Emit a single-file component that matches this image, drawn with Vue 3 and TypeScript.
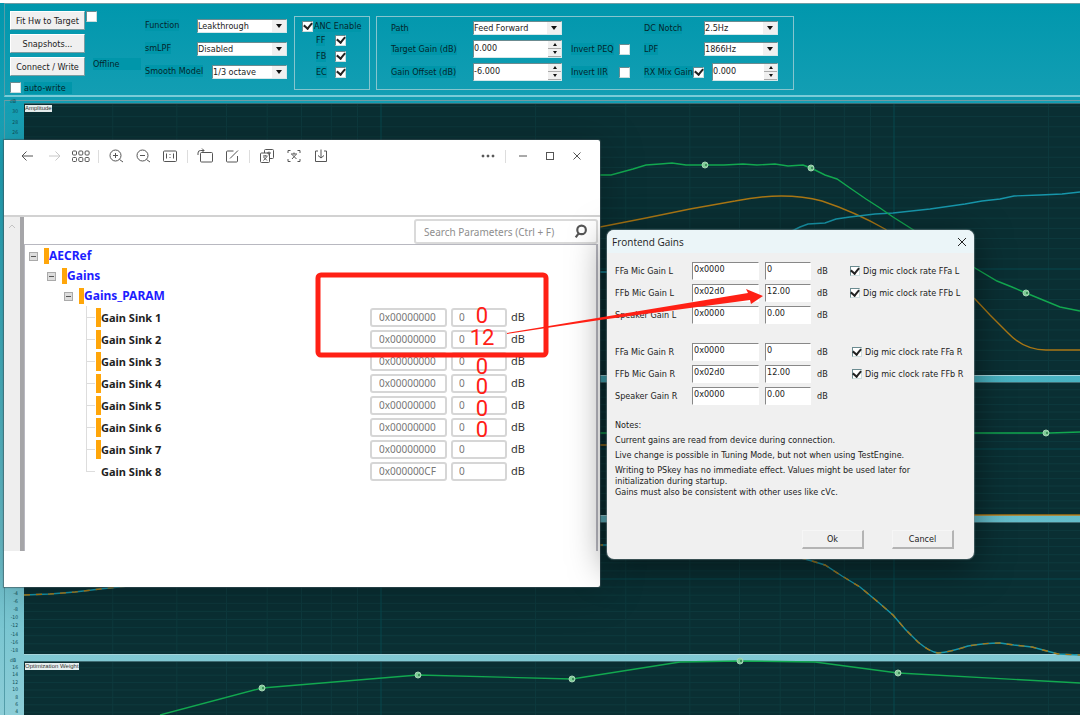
<script setup lang="ts">
import { ref } from 'vue'

interface Plot {
  id: string
  title: string
  top: number
  height: number
  zero: number
  step: number
  unit: boolean
  ticks: number[]
}

const range = (from: number, to: number, by = 2): number[] => {
  const out: number[] = []
  for (let v = from; v >= to; v -= by) out.push(v)
  return out
}

const plots: Plot[] = [
  { id: 'amplitude', title: 'Amplitude', top: 104, height: 271, zero: 269, step: 10.16, unit: true, ticks: range(30, -20) },
  { id: 'phase', title: '', top: 383, height: 132, zero: 449, step: 7.4, unit: false, ticks: range(16, -16) },
  { id: 'error', title: '', top: 523, height: 131, zero: 579, step: 8.1, unit: false, ticks: range(12, -18) },
  { id: 'weight', title: 'Optimization Weight', top: 662, height: 53, zero: 727, step: 7.4, unit: true, ticks: range(16, 4) },
]

const rows = (p: Plot): number[] => {
  const out: number[] = []
  for (let k = -40; k <= 40; k++) {
    const y = p.zero + k * p.step
    if (k !== 0 && y > p.top + 1 && y < p.top + p.height - 1) out.push(y)
  }
  return out
}

const decade = 513
const origin = -132
const minorX: number[] = []
for (let d = 0; d < 3; d++) {
  for (let n = 2; n < 10; n++) {
    const x = origin + decade * (d + Math.log10(n))
    if (x > 26 && x < 1080) minorX.push(x)
  }
}
const majorX = [origin + decade, origin + decade * 2]

const nodes: Record<string, number[][]> = {
  amplitude: [[705, 165], [811, 168], [1026, 293]],
  phase: [[1046, 433]],
  error: [],
  weight: [[262, 688], [418, 675], [572, 679], [740, 661], [898, 673]],
}

const green: Record<string, string> = {
  amplitude:
    '600,175 611,175 622,172 633,169 646,165 660,164 672,163 686,165 704,165 724,165 743,164 757,165 775,164 788,166 803,165 811,168 825,175 837,179 850,188 866,199 880,208 893,217 912,229 975,268 997,281 1012,287 1026,293 1043,300 1060,307 1080,311',
  phase: '24,433 1050,433 1080,432',
  weight: '160,715 262,688 418,675 572,679 680,662 740,661 815,662 898,673 1080,683',
}
const amber: Record<string, string> = {
  amplitude:
    'M24 330 L600 227 L646 218 L690 209 L735 201 Q784 191 822 201 Q855 212 885 229 L975 299 L990 315 L1008 333 Q1024 350 1046 350 L1080 350',
  phase: 'M24 445 H620 M974 515 H1080',
}
const cyan: Record<string, string> = {
  amplitude:
    '24,272 700,272 794,230 800,227 808,224 825,223 836,219 850,217 875,214 893,213 930,209 965,204 982,201 1000,199 1014,196 1040,195 1062,194 1080,192',
}
const dashed =
  'M24 595 L50 594 L75 592 L100 589 L128 586 L300 560 L500 545 L700 545 L801 558 L812 561 L825 565 L842 576 L860 587 L878 602 L893 615 L905 629 L918 642 Q930 652 938 653 Q950 652 968 646 Q985 643 1000 643 L1014 645 L1032 647 L1058 654 L1080 655'

const displays = ref([
  { key: 'FF', on: true },
  { key: 'FB', on: true },
  { key: 'EC', on: true },
])

const sinks = ref([
  { name: 'Gain Sink 1', raw: '0x00000000', db: '0', marked: true },
  { name: 'Gain Sink 2', raw: '0x00000000', db: '0', marked: true },
  { name: 'Gain Sink 3', raw: '0x00000000', db: '0', marked: true },
  { name: 'Gain Sink 4', raw: '0x00000000', db: '0', marked: true },
  { name: 'Gain Sink 5', raw: '0x00000000', db: '0', marked: true },
  { name: 'Gain Sink 6', raw: '0x00000000', db: '0', marked: true },
  { name: 'Gain Sink 7', raw: '0x00000000', db: '0', marked: true },
  { name: 'Gain Sink 8', raw: '0x000000CF', db: '0', marked: false },
])

const handNotes = [
  { text: '0', y: 323 },
  { text: '12', y: 345 },
  { text: '0', y: 374 },
  { text: '0', y: 394 },
  { text: '0', y: 416 },
  { text: '0', y: 437 },
]

const gainGroups = ref([
  {
    side: 'L',
    rows: [
      { id: 'ffal', label: 'FFa Mic Gain L', raw: '0x0000', db: '0', clock: 'Dig mic clock rate FFa L' },
      { id: 'ffbl', label: 'FFb Mic Gain L', raw: '0x02d0', db: '12.00', clock: 'Dig mic clock rate FFb L' },
      { id: 'spkl', label: 'Speaker Gain L', raw: '0x0000', db: '0.00', clock: '' },
    ],
  },
  {
    side: 'R',
    rows: [
      { id: 'ffar', label: 'FFa Mic Gain R', raw: '0x0000', db: '0', clock: 'Dig mic clock rate FFa R' },
      { id: 'ffbr', label: 'FFb Mic Gain R', raw: '0x02d0', db: '12.00', clock: 'Dig mic clock rate FFb R' },
      { id: 'spkr', label: 'Speaker Gain R', raw: '0x0000', db: '0.00', clock: '' },
    ],
  },
])
</script>

<template>
  <main class="app">
    <section class="toolbar">
      <div class="actions">
        <button type="button" class="push">Fit Hw to Target</button>
        <input type="checkbox" class="check side" aria-label="Auto fit" />
        <button type="button" class="push">Snapshots...</button>
        <span></span>
        <button type="button" class="push">Connect / Write</button>
        <span class="offline tag">Offline</span>
        <label class="auto"><input type="checkbox" class="check" /><span class="tag wide">auto-write</span></label>
      </div>

      <div class="modes">
        <label for="fn" class="tag">Function</label>
        <span class="drop"><select id="fn"><option>Leakthrough</option></select></span>
        <label for="sm" class="tag">smLPF</label>
        <span class="drop"><select id="sm"><option>Disabled</option></select></span>
        <label for="smooth" class="tag">Smooth Model</label>
        <span class="drop narrow"><select id="smooth"><option>1/3 octave</option></select></span>
      </div>

      <div class="box anc">
        <label class="anc-main"><input type="checkbox" class="check" checked /><span class="tag">ANC Enable</span></label>
        <label v-for="d in displays" :key="d.key" class="anc-row">
          <span class="tag">{{ d.key }}</span>
          <input v-model="d.on" type="checkbox" class="check" />
        </label>
      </div>

      <div class="box path">
        <label for="path" class="tag">Path</label>
        <span class="drop"><select id="path"><option>Feed Forward</option></select></span>
        <span></span>
        <label for="notch" class="tag">DC Notch</label>
        <span class="drop"><select id="notch"><option>2.5Hz</option></select></span>

        <label for="tg" class="tag">Target Gain (dB)</label>
        <span class="spin"><input id="tg" type="text" value="0.000" /><span class="arrows"><button type="button" aria-label="Increase"></button><button type="button" class="down" aria-label="Decrease"></button></span></span>
        <label class="invert"><span class="tag">Invert PEQ</span><input type="checkbox" class="check" /></label>
        <label for="lpf" class="tag">LPF</label>
        <span class="drop"><select id="lpf"><option>1866Hz</option></select></span>

        <label for="go" class="tag">Gain Offset (dB)</label>
        <span class="spin"><input id="go" type="text" value="-6.000" /><span class="arrows"><button type="button" aria-label="Increase"></button><button type="button" class="down" aria-label="Decrease"></button></span></span>
        <label class="invert"><span class="tag">Invert IIR</span><input type="checkbox" class="check" /></label>
        <label class="rx"><span class="tag">RX Mix Gain</span><input type="checkbox" class="check" checked /></label>
        <span class="spin short"><input type="text" value="0.000" aria-label="RX mix gain value" /><span class="arrows"><button type="button" aria-label="Increase"></button><button type="button" class="down" aria-label="Decrease"></button></span></span>
      </div>
    </section>

    <section class="charts">
      <div v-for="p in plots" :key="p.id" class="chart" :class="p.id">
        <div class="axis">
          <span v-if="p.unit" class="unit">dB</span>
          <span v-for="t in p.ticks" :key="t">{{ t }}</span>
        </div>
        <div class="plot">
          <svg :viewBox="`24 ${p.top} 1056 ${p.height}`" preserveAspectRatio="none" aria-hidden="true">
            <g class="grid">
              <line v-for="y in rows(p)" :key="'y' + y" x1="24" x2="1080" :y1="y" :y2="y" />
              <line v-for="x in minorX" :key="'x' + x" :x1="x" :x2="x" :y1="p.top" :y2="p.top + p.height" />
            </g>
            <g class="grid major">
              <line v-if="p.zero < 715" x1="24" x2="1080" :y1="p.zero" :y2="p.zero" />
              <line v-for="x in majorX" :key="x" :x1="x" :x2="x" :y1="p.top" :y2="p.top + p.height" />
            </g>
            <path v-if="amber[p.id]" class="amber" :d="amber[p.id]" />
            <polyline v-if="cyan[p.id]" class="cyan" :points="cyan[p.id]" />
            <polyline v-if="green[p.id]" class="green" :points="green[p.id]" />
            <template v-if="p.id === 'error'">
              <path class="cyan" :d="dashed" />
              <path class="amber dash" :d="dashed" />
            </template>
            <g v-for="n in nodes[p.id]" :key="n[0]" class="node">
              <circle :cx="n[0]" :cy="n[1]" r="3" />
              <circle class="core" :cx="n[0] + 1" :cy="n[1]" r="1" />
            </g>
          </svg>
          <span v-if="p.title" class="caption">{{ p.title }}</span>
        </div>
      </div>
    </section>

    <section class="viewer">
      <header class="viewer-bar">
        <button type="button" aria-label="Back"><svg viewBox="0 0 16 16"><path d="M14 8H3M7.500 3.500L3 8l4.500 4.500" /></svg></button>
        <button type="button" class="faint" aria-label="Forward"><svg viewBox="0 0 16 16"><path d="M3 8h11M9.500 3.500L14 8l-4.500 4.500" /></svg></button>
        <button type="button" class="thumbs" aria-label="Thumbnails"><svg viewBox="0 0 20 16"><g v-for="c in 3" :key="c"><rect :x="c * 6.300 - 4.800" y="3" width="4" height="4" rx="1" /><rect :x="c * 6.300 - 4.800" y="9.500" width="4" height="4" rx="1" /></g></svg></button>
        <i class="rule"></i>
        <button type="button" aria-label="Zoom in"><svg viewBox="0 0 16 16"><circle cx="7.500" cy="7.500" r="5.500" /><path d="M11.500 11.500L15 14M5 7.500h5M7.500 5v5" /></svg></button>
        <button type="button" aria-label="Zoom out"><svg viewBox="0 0 16 16"><circle cx="7.500" cy="7.500" r="5.500" /><path d="M11.500 11.500L15 14M5 7.500h5" /></svg></button>
        <button type="button" aria-label="Actual size"><svg viewBox="0 0 16 16"><rect x="1.500" y="3" width="13" height="10.500" rx="1" /><path d="M4.500 5.500v5M11.500 5.500v5M8 6v1M8 9v1" /></svg></button>
        <i class="rule"></i>
        <button type="button" aria-label="Rotate"><svg viewBox="0 0 16 16"><rect x="3.500" y="4.500" width="12" height="9.500" rx="1" /><path d="M1 7V5q0-2.500 2.500-2.500h3.500M5 .5l2 2-2 2" /></svg></button>
        <button type="button" aria-label="Edit"><svg viewBox="0 0 16 16"><path d="M9.500 3H3.500q-1 0-1 1v9q0 1 1 1h9q1 0 1-1V8M6 10.500l8-8" /></svg></button>
        <i class="rule"></i>
        <button type="button" aria-label="Translate"><svg viewBox="0 0 16 16"><path d="M5.500 5V2.500q0-1 1-1h7q1 0 1 1v7q0 1-1 1H11M2.500 5h7q1 0 1 1v7.500q0 1-1 1h-7q-1 0-1-1V6q0-1 1-1zM4 8h4.500M6.200 7v1M4.500 12.500L8 8.500M4.500 9l3.500 3.500M8 5h4M10 3.500v4" /></svg></button>
        <button type="button" aria-label="Recognize text"><svg viewBox="0 0 16 16"><path d="M2 5V2.500h2.500M11.500 2.500H14V5M14 11v2.500h-2.500M4.500 13.500H2V11M5 6h6M8 4.500V6M6 11l4-4.500M6 6.500l4.500 4.500" /></svg></button>
        <button type="button" aria-label="Save"><svg viewBox="0 0 16 16"><path d="M5 3H2.500v10.500h11V3H11M8 1.500V10M5 7.500L8 10l3-2.500" /></svg></button>
        <span class="push-right"></span>
        <button type="button" class="solid" aria-label="More"><svg viewBox="0 0 16 16"><circle cx="3" cy="8" r="1" /><circle cx="8" cy="8" r="1" /><circle cx="13" cy="8" r="1" /></svg></button>
        <i class="rule"></i>
        <button type="button" aria-label="Minimize"><svg viewBox="0 0 16 16"><path d="M4 8h8" /></svg></button>
        <button type="button" aria-label="Maximize"><svg viewBox="0 0 16 16"><rect x="4.500" y="4.500" width="7" height="7" /></svg></button>
        <button type="button" aria-label="Close viewer"><svg viewBox="0 0 16 16"><path d="M4.500 4.500l7 7M11.500 4.500l-7 7" /></svg></button>
      </header>

      <div class="viewer-body">
        <div class="gutter"><svg viewBox="0 0 8 5"><path d="M1 4l3-3 3 3" /></svg></div>
        <div class="params">
          <div class="search">
            <input type="search" placeholder="Search Parameters (Ctrl + F)" aria-label="Search Parameters" />
            <svg viewBox="0 0 14 14"><circle cx="8" cy="5.500" r="4" /><path d="M5.500 8.500L2.500 12.500" /></svg>
          </div>
          <div class="tree">
            <div class="branch root"><button type="button" class="toggle" aria-label="Collapse"></button><b>AECRef</b></div>
            <div class="branch second"><button type="button" class="toggle" aria-label="Collapse"></button><b>Gains</b></div>
            <div class="branch third"><button type="button" class="toggle" aria-label="Collapse"></button><b>Gains_PARAM</b></div>
            <ul>
              <li v-for="s in sinks" :key="s.name">
                <span class="sink" :class="{ marked: s.marked }">{{ s.name }}</span>
                <input v-model="s.raw" type="text" class="raw" :aria-label="s.name + ' raw value'" />
                <input v-model="s.db" type="text" class="value" :aria-label="s.name + ' in dB'" />
                <span class="db">dB</span>
              </li>
            </ul>
          </div>
        </div>
      </div>
    </section>

    <section class="dialog" role="dialog" aria-labelledby="dialog-title">
      <header>
        <h2 id="dialog-title">Frontend Gains</h2>
        <button type="button" aria-label="Close"><svg viewBox="0 0 10 10"><path d="M1 1l8 8M9 1l-8 8" /></svg></button>
      </header>
      <form @submit.prevent>
        <div v-for="g in gainGroups" :key="g.side" class="gains" :class="'side-' + g.side">
          <div v-for="r in g.rows" :key="r.id" class="gain">
            <label :for="r.id">{{ r.label }}</label>
            <input :id="r.id" v-model="r.raw" type="text" />
            <input v-model="r.db" type="text" :aria-label="r.label + ' in dB'" />
            <span>dB</span>
            <label v-if="r.clock" class="clock"><input type="checkbox" class="check" checked />{{ r.clock }}</label>
          </div>
        </div>
        <div class="notes">
          <p>Notes:</p>
          <p>Current gains are read from device during connection.</p>
          <p>Live change is possible in Tuning Mode, but not when using TestEngine.</p>
          <p>Writing to PSkey has no immediate effect. Values might be used later for<br />initialization during startup.<br />Gains must also be consistent with other uses like cVc.</p>
        </div>
        <footer>
          <button type="submit">Ok</button>
          <button type="button">Cancel</button>
        </footer>
      </form>
    </section>

    <svg class="callout" width="1080" height="715" viewBox="0 0 1080 715">
      <rect x="318" y="275" width="228" height="80" rx="3" />
      <path d="M507 333L748 293L746 289L763 296L751 304L750 300L600 320L507 334z" />
      <text v-for="n in handNotes" :key="n.y" x="482" :y="n.y">{{ n.text }}</text>
    </svg>
  </main>
</template>

<style>
html,
body {
  margin: 0;
}
</style>

<style scoped>
.app {
  position: relative;
  display: flex;
  flex-direction: column;
  box-sizing: border-box;
  height: 100vh;
  overflow: hidden;
  padding-left: 4px;
  border-top: 3px solid #fff;
  background: linear-gradient(#0097ad, #139eb3 13%, #47b2c1 52%, #8ccdd7);
  font-family: 'DejaVu Sans Condensed', 'DejaVu Sans', sans-serif;
  font-size: 9px;
  line-height: 12px;
  color: #04262c;
}
.app * {
  box-sizing: border-box;
}
button,
input,
select {
  font: inherit;
  color: inherit;
  margin: 0;
  padding: 0;
  border: 0;
  border-radius: 0;
}
button {
  cursor: pointer;
}

.toolbar {
  display: flex;
  align-items: flex-start;
  border-top: 1px solid #6f9ca4;
  border-left: 1px solid #549da9;
  border-bottom: 2px solid #7accd8;
  padding: 7px 0 0 5px;
}
.tag {
  justify-self: start;
  background: #0096aa;
}
.actions {
  display: grid;
  grid-template-columns: 75px auto;
  grid-template-rows: 19px 19px 19px 15px;
  gap: 4px 1px;
  width: 135px;
}
.push {
  background: #f0f0f0;
  color: #222;
  border: 1px solid;
  border-color: #fff #7c9da2 #7c9da2 #fff;
  white-space: nowrap;
}
.check {
  appearance: none;
  flex: none;
  display: grid;
  place-items: center;
  width: 11px;
  height: 11px;
  background: #fff;
  border: 1px solid;
  border-color: #6b8b90 #cdd #cdd #6b8b90;
}
.check:checked::after {
  content: '';
  width: 6px;
  height: 4px;
  margin-bottom: 2px;
  border: solid #222;
  border-width: 0 0 2px 2px;
  transform: rotate(-50deg);
}
.offline {
  align-self: center;
  width: 48px;
  margin-left: 7px;
  margin-bottom: 6px;
}
.auto {
  display: flex;
  align-items: center;
  gap: 3px;
}
.auto .wide {
  padding-right: 6px;
}

.modes {
  display: grid;
  grid-template-columns: 52px 90px;
  grid-auto-rows: 14px;
  align-items: center;
  row-gap: 9px;
  width: 149px;
  padding-top: 8px;
}
.modes label {
  white-space: nowrap;
  margin-bottom: 2px;
}
.drop {
  position: relative;
  display: flex;
  height: 14px;
  background: #fff;
  color: #222;
  border: 1px solid;
  border-color: #6b8b90 #d5e8ea #d5e8ea #6b8b90;
}
.drop.narrow {
  width: 75px;
  justify-self: end;
}
.drop select {
  appearance: none;
  width: 100%;
  background: transparent;
  line-height: 12px;
}
.drop::after {
  content: '';
  position: absolute;
  right: 4px;
  top: 4px;
  border: solid transparent;
  border-width: 4px 3px 0;
  border-top-color: #111;
}
.drop::before {
  content: '';
  position: absolute;
  right: 0;
  top: 0;
  bottom: 0;
  width: 14px;
  background: #f0f0f0;
}

.box {
  border: 1px solid #86c5ce;
  height: 74px;
  margin-top: 5px;
}
.anc {
  width: 76px;
  margin-right: 6px;
  padding: 3px 0 0 7px;
}
.anc-main {
  display: flex;
  align-items: center;
  gap: 1px;
  white-space: nowrap;
  height: 12px;
}
.anc-row {
  display: grid;
  grid-template-columns: 19px 11px;
  align-items: center;
  height: 16px;
  padding-left: 14px;
  box-sizing: content-box;
}
.path {
  display: grid;
  grid-template-columns: 82px 89px 82px 60px 74px;
  grid-template-rows: 14px 18px 18px;
  row-gap: 5px;
  align-items: center;
  width: 418px;
  padding: 4px 0 0 14px;
  align-content: start;
}
.path label {
  white-space: nowrap;
}
.spin {
  display: flex;
  height: 18px;
  background: #fff;
  color: #222;
  border: 1px solid;
  border-color: #6b8b90 #d5e8ea #d5e8ea #6b8b90;
}
.spin input {
  flex: 1;
  min-width: 0;
  background: transparent;
  padding-bottom: 2px;
}
.spin.short {
  margin-left: 8px;
}
.arrows {
  display: grid;
  width: 13px;
}
.arrows button {
  display: grid;
  place-items: center;
  background: #f0f0f0;
  border-bottom: 1px solid #aaa;
}
.arrows button::after {
  content: '';
  border: solid transparent;
  border-width: 0 2px 3px;
  border-bottom-color: #111;
}
.arrows .down::after {
  border-width: 3px 2px 0;
  border-top-color: #111;
}
.invert {
  display: flex;
  justify-content: space-between;
  align-items: center;
  padding: 0 14px 0 9px;
}
.rx {
  display: flex;
  align-items: center;
  justify-content: space-between;
}

.charts {
  flex: 1;
  min-height: 0;
  display: grid;
  grid-template-rows: 271fr 132fr 131fr 53fr;
  gap: 8px;
  margin-top: 3px;
  padding-top: 3px;
  border-top: 1px solid #6f9ca4;
  border-left: 1px solid #549da9;
}
.chart {
  display: grid;
  grid-template-columns: 19px 1fr;
  min-height: 0;
}
.axis {
  display: flex;
  flex-direction: column;
  justify-content: space-around;
  align-items: flex-end;
  min-height: 0;
  padding-right: 6px;
  font-size: 5px;
  line-height: 6px;
  color: #0f4d57;
}
.axis .unit {
  margin-right: 2px;
}
.amplitude .axis {
  margin-top: -8px;
}
.weight .axis {
  margin-top: -6px;
}
.plot {
  position: relative;
  min-height: 0;
  background: #0a2f33;
  box-shadow: 0 -1px #3f6c72, 0 1px #a6d5dc;
}
.plot > svg {
  display: block;
  width: 100%;
  height: 100%;
  overflow: visible;
}
.caption {
  position: absolute;
  left: 1px;
  top: 1px;
  background: #e6eeee;
  color: #333;
  font-family: 'Liberation Sans', Arial, sans-serif;
  font-size: 6px;
  line-height: 7px;
}
.grid line {
  stroke: #0e3a3e;
}
.grid.major line {
  stroke: #06494f;
}
.amber,
.cyan,
.green {
  fill: none;
  stroke-width: 1.4;
}
.amber {
  stroke: #a97614;
}
.cyan {
  stroke: #1796aa;
}
.green {
  stroke: #12a84f;
}
.dash {
  stroke-dasharray: 6 6;
}
.node circle {
  fill: #7fce97;
  stroke: #a5d2b4;
}
.node .core {
  fill: #2d7a4a;
  stroke: none;
}

.viewer {
  position: absolute;
  left: 4px;
  top: 137px;
  width: 596px;
  height: 447px;
  display: flex;
  flex-direction: column;
  background: #fff;
  border-radius: 0 2px 2px 0;
  box-shadow: 0 0 1px 1px rgba(60, 80, 85, 0.6), 4px 4px 40px rgba(0, 0, 0, 0.25);
  font-family: 'Noto Sans', 'Open Sans', sans-serif;
}
.viewer-bar {
  display: flex;
  align-items: center;
  flex: none;
  height: 32px;
  padding: 0 15px;
  gap: 11px;
}
.viewer-bar button {
  display: flex;
  background: transparent;
}
.viewer-bar svg {
  width: 16px;
  height: 16px;
  fill: none;
  stroke: #555;
}
.viewer-bar .thumbs {
  margin: 0 -2px;
}
.viewer-bar .thumbs svg {
  width: 20px;
}
.viewer-bar .faint svg {
  stroke: #c8c8c8;
}
.viewer-bar .solid svg {
  fill: #333;
}
.rule {
  width: 1px;
  height: 13px;
  margin: 0 -2px;
  background: #ddd;
}
.push-right {
  flex: 1;
}
.viewer-body {
  display: flex;
  height: 336px;
  margin-top: 43px;
  border-top: 2px solid #d2d2d2;
}
.gutter {
  flex: none;
  width: 20px;
  padding: 7px 4px;
  background: #eee;
  border-right: 4px solid #a5a5a8;
}
.gutter svg {
  display: block;
  width: 8px;
  fill: none;
  stroke: #c4c4c4;
}
.params {
  flex: 1;
  display: flex;
  flex-direction: column;
  margin-right: 2px;
}
.search {
  align-self: flex-end;
  display: flex;
  align-items: center;
  width: 184px;
  height: 25px;
  margin-top: 2px;
  border: 2px solid #dadada;
  border-radius: 3px;
  padding: 0 8px;
}
.search input {
  flex: 1;
  min-width: 0;
  appearance: none;
  background: transparent;
  font-size: 10px;
}
.search input::placeholder {
  color: #8e8e8e;
  opacity: 1;
}
.search svg {
  width: 15px;
  fill: none;
  stroke: #555;
  stroke-width: 2;
}
.tree {
  flex: 1;
  border: solid #b8b8c0;
  border-width: 1px 2px 0 1px;
  padding-top: 1px;
}
.branch {
  display: flex;
  align-items: center;
  height: 20px;
  font-size: 12px;
  color: #1d1dff;
}
.branch b {
  border-left: 5px solid #ffa60a;
  line-height: 16px;
}
.toggle {
  width: 9px;
  height: 9px;
  margin-right: 6px;
  background: linear-gradient(#555, #555) center / 5px 1px no-repeat, #ddd;
  border: 1px solid #aaa;
}
.root {
  padding-left: 4px;
}
.second {
  padding-left: 22px;
}
.third {
  padding-left: 39px;
}
ul {
  list-style: none;
  margin: 0 0 0 61px;
  padding: 0;
  background: linear-gradient(#ddd, #ddd) left top / 1px 166px no-repeat;
}
li {
  display: grid;
  grid-template-columns: 280px 77px 56px auto;
  column-gap: 4px;
  align-items: center;
  height: 22px;
}
.sink {
  display: flex;
  align-items: center;
  font-size: 11px;
  font-weight: 700;
  color: #222;
  line-height: 19px;
}
.sink::before {
  content: '';
  width: 9px;
  height: 1px;
  margin-right: 6px;
  background: #ddd;
}
.sink.marked {
  background: linear-gradient(#ffa60a, #ffa60a) 10px center / 5px 100% no-repeat;
}
li input {
  width: 100%;
  height: 19px;
  padding-left: 7px;
  border: 2px solid #d6d6d6;
  border-radius: 3px;
  background: #fff;
  font-size: 10px;
  color: #777;
}
.value {
  padding-left: 6px;
}
.db {
  font-size: 11px;
  color: #333;
}

.dialog {
  position: absolute;
  left: 607px;
  top: 227px;
  width: 367px;
  background: #f0f0f0;
  color: #222;
  border-radius: 7px;
  box-shadow: 0 0 1px 1px rgba(120, 140, 145, 0.5), 0 8px 36px rgba(0, 0, 0, 0.5);
}
.dialog header {
  display: flex;
  align-items: center;
  justify-content: space-between;
  height: 23px;
  padding: 0 7px 0 5px;
  background: #ebf5f8;
  border-radius: 7px 7px 0 0;
}
.dialog h2 {
  margin: 0;
  font: 400 10px/14px 'Open Sans', 'Noto Sans', sans-serif;
}
.dialog header button {
  display: flex;
  background: transparent;
}
.dialog header svg {
  width: 10px;
  fill: none;
  stroke: #222;
}
.dialog form {
  padding: 7px 20px 10px 8px;
}
.gains.side-R {
  margin-top: 15px;
}
.gain {
  display: grid;
  grid-template-columns: 77px 67px 6px 46px 6px 33px auto;
  align-items: center;
  height: 22px;
  white-space: nowrap;
}
.gain input[type='text'] {
  height: 18px;
  padding: 0 0 4px 1px;
  background: #fff;
  border: 1px solid;
  border-color: #888 #fff #fff #888;
}
.gain input:nth-of-type(2) {
  grid-column: 4;
}
.gain > span {
  grid-column: 6;
}
.gain .clock {
  grid-column: 7;
}
.clock {
  display: flex;
  align-items: center;
  gap: 3px;
}
.side-R .clock {
  padding-left: 2px;
}
.clock .check {
  width: 10px;
  height: 10px;
}
.notes {
  margin-top: 13px;
}
.notes p {
  margin: 0 0 4px;
  line-height: 11px;
  white-space: nowrap;
}
.dialog footer {
  display: flex;
  justify-content: flex-end;
  gap: 28px;
  margin-top: 32px;
}
.dialog footer button {
  width: 62px;
  height: 19px;
  background: #f0f0f0;
  border: solid;
  border-width: 1px 2px 2px 1px;
  border-color: #f6f6f6 #b4b4b4 #b4b4b4 #f6f6f6;
}

.callout {
  position: absolute;
  left: 0;
  top: -3px;
  pointer-events: none;
}
.callout rect {
  fill: none;
  stroke: #ff2015;
  stroke-width: 5;
}
.callout path {
  fill: #ff2015;
}
.callout text {
  fill: #ff2015;
  font-family: Roboto, 'Noto Sans', sans-serif;
  font-size: 22px;
  text-anchor: middle;
}
</style>
